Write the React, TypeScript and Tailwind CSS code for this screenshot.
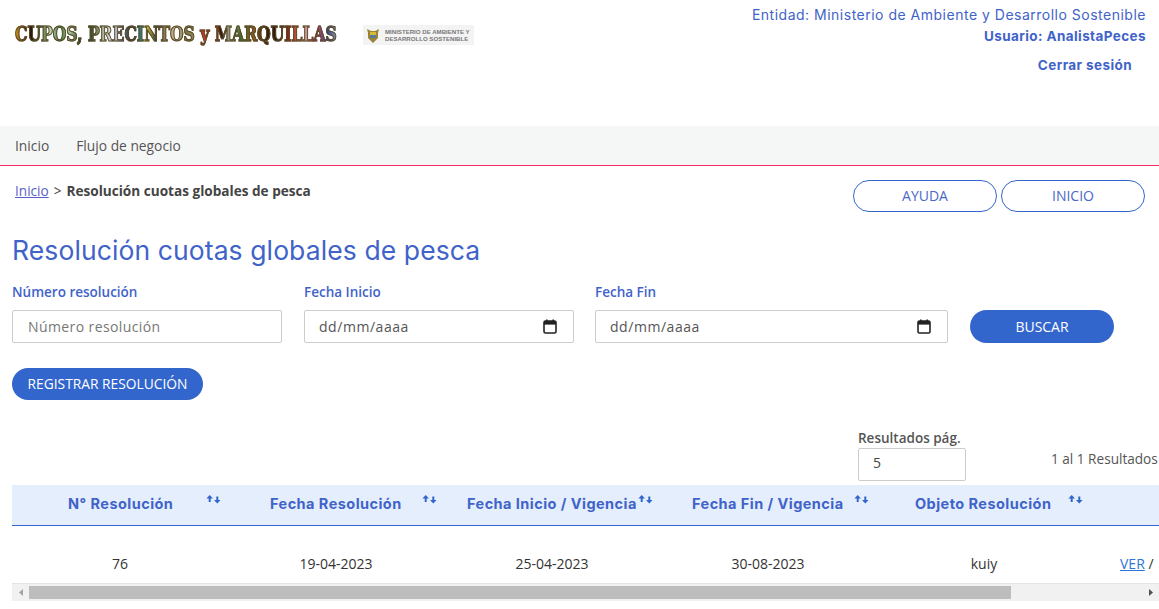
const logoGradient =
  'bg-[linear-gradient(90deg,#d39a1e_0%,#6b2f0c_3%,#2a1608_5%,#3e6b2c_8%,#c4d6b8_11%,#3e7a38_14%,#a8c49a_17%,#2f4a1c_20%,#1f3a14_23%,#8d9a78_26%,#dfe4ea_30%,#7d8ea6_33%,#2c2c22_36%,#2f7a80_39%,#c8b83a_41%,#27403a_44%,#a08c5a_47%,#c9bf9a_50%,#7a7444_53%,#8f9058_56%,#c23a22_58%,#d8402a_62%,#2a140c_64%,#b8c0a0_67%,#3f6b30_70%,#8a5a1c_74%,#3a2208_78%,#26150c_82%,#a8321a_86%,#c8a8a0_90%,#e8406e_93%,#34467c_97%,#8a96b8_100%)]';

function SortIcon() {
  return (
    <svg width="15" height="9" viewBox="0 0 15 9" className="shrink-0" fill="#3366cc">
      <path d="M3.7 0 L7 3.6 L4.7 3.6 L4.7 7 L2.7 7 L2.7 3.6 L0.4 3.6 Z" />
      <path d="M11.3 8.5 L8 4.9 L10.3 4.9 L10.3 1.5 L12.3 1.5 L12.3 4.9 L14.6 4.9 Z" />
    </svg>
  );
}

function CalendarIcon() {
  return (
    <svg width="14" height="15" viewBox="0 0 14 15" className="shrink-0">
      <rect x="1" y="2" width="12" height="12" rx="1.5" fill="none" stroke="#222222" strokeWidth="1.6" />
      <rect x="1" y="2" width="12" height="3.6" fill="#222222" />
      <rect x="3" y="0.5" width="1.6" height="2" fill="#222222" />
      <rect x="9.4" y="0.5" width="1.6" height="2" fill="#222222" />
    </svg>
  );
}

function DateField({ className }: { className: string }) {
  return (
    <div className={`h-[33px] border border-[#cccccc] rounded-[2px] flex items-center justify-between pl-[14px] pr-[16px] text-[14px] tracking-[0.55px] text-[#555555] ${className}`}>
      <span>dd/mm/aaaa</span>
      <CalendarIcon />
    </div>
  );
}

function HeadCell({ label, width, gap, pad }: { label: string; width: string; gap: string; pad: string }) {
  return (
    <div className={`flex items-start shrink-0 ${width} ${pad}`}>
      <span className="font-bold text-[14.5px] tracking-[0.45px] leading-[20px] text-[#3f63c9] whitespace-nowrap font-['Inter',sans-serif]">{label}</span>
      <span className={`mt-[1px] ${gap}`}><SortIcon /></span>
    </div>
  );
}

export default function App() {
  return (
    <div className="w-[1159px] h-[609px] overflow-hidden bg-white font-['Open_Sans','Noto_Sans',sans-serif] text-[#444444]">
      {/* Header */}
      <header className="h-[126px] flex justify-between">
        <div className="flex items-start pl-[15px] pt-[25px]">
          <span className={`w-[322px] scale-y-[1.25] font-['DejaVu_Serif',serif] font-bold text-[15.6px] leading-[20px] whitespace-nowrap [-webkit-text-stroke:0.9px_#5a4a2a] bg-clip-text text-transparent ${logoGradient}`}>
            CUPOS, PRECINTOS y MARQUILLAS
          </span>
          <div className="ml-[26px] w-[111px] h-[20px] bg-[#f3f3f3] flex items-center">
            <svg width="18" height="18" viewBox="0 0 18 18" className="ml-[1px] shrink-0">
              <path d="M3 3 L7 5 L11 5 L15 3 L14 7 L14 12 L9 17 L4 12 L4 7 Z" fill="#9a8434" />
              <rect x="6" y="6" width="6" height="3" fill="#d8b93a" />
              <rect x="6" y="9" width="6" height="3" fill="#5a7a9a" />
            </svg>
            <span className="ml-[3px] text-[6.1px] leading-[7.5px] font-bold text-[#777777] font-['Liberation_Sans',sans-serif] whitespace-nowrap">
              MINISTERIO DE AMBIENTE Y<br />DESARROLLO SOSTENIBLE
            </span>
          </div>
        </div>
        <div className="flex flex-col items-end pr-[13px] pt-[5px] font-['Inter',sans-serif] text-[#3f63c9]">
          <p className="text-[14px] leading-[20px] tracking-[0.5px]">Entidad: Ministerio de Ambiente y Desarrollo Sostenible</p>
          <p className="text-[13.5px] leading-[20px] tracking-[0.4px] font-bold mt-[1px]">Usuario: AnalistaPeces</p>
          <p className="text-[13.5px] leading-[20px] tracking-[0.4px] font-bold mt-[9px] mr-[14px]">Cerrar sesión</p>
        </div>
      </header>

      {/* Nav */}
      <nav className="h-[40px] bg-[#f5f7f6] border-b border-[#ee2a5f] flex items-center pl-[15px] pt-[1px] gap-[27px] text-[13.8px] text-[#555555]">
        <span>Inicio</span>
        <span>Flujo de negocio</span>
      </nav>

      <main className="pl-[12px]">
        {/* Breadcrumb + top buttons */}
        <div className="flex justify-between pt-[14px] pr-[14px]">
          <p className="pl-[3px] pt-[1px] text-[13.6px] leading-[20px]">
            <span className="underline text-[#5a5fc8]">Inicio</span>
            <span className="mx-[5px]">&gt;</span>
            <span className="font-bold text-[#444444]">Resolución cuotas globales de pesca</span>
          </p>
          <div className="flex gap-[4px] text-[14px] text-[#4a68c8]">
            <button className="w-[144px] h-[32px] pb-[1px] rounded-full border border-[#3366cc]">AYUDA</button>
            <button className="w-[144px] h-[32px] pb-[1px] rounded-full border border-[#3366cc]">INICIO</button>
          </div>
        </div>

        <h1 className="mt-[21px] text-[26.5px] tracking-[0.1px] leading-[34px] text-[#3f63c9] font-['Inter',sans-serif]">Resolución cuotas globales de pesca</h1>

        {/* Filters */}
        <div className="flex mt-[15px]">
          <div className="w-[292px]">
            <p className="text-[13.5px] leading-[20px] font-semibold text-[#3f63c9] mb-[8px]">Número resolución</p>
            <div className="w-[270px] h-[33px] border border-[#cccccc] rounded-[2px] flex items-center pl-[15px] text-[14px] tracking-[0.4px] text-[#777777]">Número resolución</div>
          </div>
          <div className="w-[291px]">
            <p className="text-[13.5px] leading-[20px] font-semibold text-[#3f63c9] mb-[8px]">Fecha Inicio</p>
            <DateField className="w-[270px]" />
          </div>
          <div className="w-[375px]">
            <p className="text-[13.5px] leading-[20px] font-semibold text-[#3f63c9] mb-[8px]">Fecha Fin</p>
            <DateField className="w-[353px]" />
          </div>
          <button className="mt-[28px] w-[144px] h-[33px] rounded-full bg-[#3366cc] text-white text-[14px]">BUSCAR</button>
        </div>

        <button className="mt-[25px] block w-[191px] h-[32px] rounded-full bg-[#3366cc] text-white text-[13.8px]">REGISTRAR RESOLUCIÓN</button>

        {/* Page size + count */}
        <div className="flex mt-[28px] h-[54px]">
          <div className="ml-[846px] w-[108px]">
            <p className="text-[13.5px] leading-[20px] font-semibold text-[#555555]">Resultados pág.</p>
            <div className="h-[33px] border border-[#cccccc] rounded-[2px] flex items-center pl-[14px] pb-[4px] text-[14px]">5</div>
          </div>
          <p className="ml-[85px] mt-[21px] text-[13.6px] leading-[20px] text-[#555555] whitespace-nowrap">1 al 1 Resultados</p>
        </div>

        {/* Table */}
        <div className="mt-[3px] overflow-hidden">
          <div className="h-[41px] bg-[#e4eefd] border-b border-[#3366cc] flex pt-[9px] whitespace-nowrap">
            <HeadCell label="N° Resolución" width="w-[202px]" pad="pl-[56px]" gap="ml-[33px]" />
            <HeadCell label="Fecha Resolución" width="w-[197px]" pad="pl-[56px]" gap="ml-[20px]" />
            <HeadCell label="Fecha Inicio / Vigencia" width="w-[225px]" pad="pl-[56px]" gap="ml-[1px]" />
            <HeadCell label="Fecha Fin / Vigencia" width="w-[223px]" pad="pl-[56px]" gap="ml-[10px]" />
            <HeadCell label="Objeto Resolución" width="w-[200px]" pad="pl-[56px]" gap="ml-[17px]" />
          </div>
          <div className="h-[58px] flex items-end pb-[9px] text-[14px] leading-[20px] text-[#333333] border-b border-[#e4e4e4]">
            <span className="w-[216px] text-center">76</span>
            <span className="w-[216px] text-center">19-04-2023</span>
            <span className="w-[216px] text-center">25-04-2023</span>
            <span className="w-[216px] text-center">30-08-2023</span>
            <span className="w-[216px] text-center">kuiy</span>
            <span className="pl-[28px] whitespace-nowrap">
              <span className="underline text-[#2f74d8]">VER</span> /
            </span>
          </div>
          {/* Scrollbar */}
          <div className="h-[17px] bg-[#f1f1f1] flex items-center">
            <span className="w-[17px] flex justify-center">
              <svg width="4" height="7" viewBox="0 0 4 7"><path d="M4 0 L0 3.5 L4 7 Z" fill="#a3a3a3" /></svg>
            </span>
            <div className="w-[982px] h-[13px] bg-[#bdbdbd]" />
            <span className="ml-auto w-[17px] flex justify-center">
              <svg width="4" height="7" viewBox="0 0 4 7"><path d="M0 0 L4 3.5 L0 7 Z" fill="#505050" /></svg>
            </span>
          </div>
        </div>
      </main>
    </div>
  );
}
